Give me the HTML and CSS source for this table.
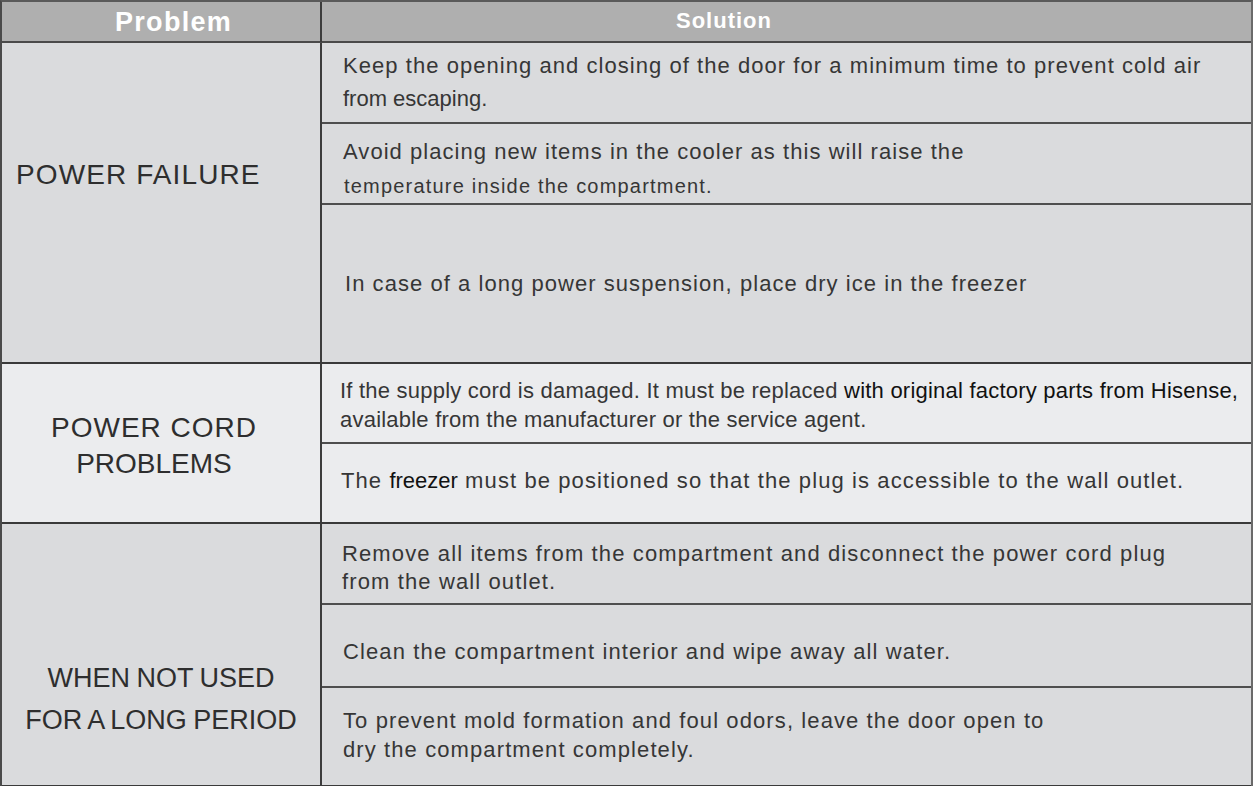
FILE: index.html
```html
<!DOCTYPE html>
<html>
<head>
<meta charset="utf-8">
<link rel="stylesheet" href="styles.css">
</head>
<body>
<div class="table">
  <div class="head">
    <div class="hcell hp">Problem</div>
    <div class="hcell hs">Solution</div>
  </div>

  <div class="group g1">
    <div class="prob pf">POWER FAILURE</div>
    <div class="sols">
      <div class="sol s11"><span class="ln">Keep the opening and closing of the door for a minimum time to prevent cold air</span><span class="ln plain">from escaping.</span></div>
      <div class="sol s12"><span class="ln">Avoid placing new items in the cooler as this will raise the</span><span class="ln sm">temperature inside the compartment.</span></div>
      <div class="sol s13"><span class="ln">In case of a long power suspension, place dry ice in the freezer</span></div>
    </div>
  </div>

  <div class="group g2">
    <div class="prob pc"><span class="ln">POWER CORD</span><span class="ln pl2">PROBLEMS</span></div>
    <div class="sols">
      <div class="sol s21"><span class="ln">If the supply cord is damaged. It must be replaced <span class="dk">with original factory parts from Hisense,</span></span><span class="ln">available from the manufacturer or the service agent.</span></div>
      <div class="sol s22"><span class="ln">The <span class="dk tight">freezer</span> must be positioned so that the plug is accessible to the wall outlet.</span></div>
    </div>
  </div>

  <div class="group g3">
    <div class="prob pw"><span class="ln">WHEN NOT USED</span><span class="ln">FOR A LONG PERIOD</span></div>
    <div class="sols">
      <div class="sol s31"><span class="ln">Remove all items from the compartment and disconnect the power cord plug</span><span class="ln">from the wall outlet.</span></div>
      <div class="sol s32"><span class="ln">Clean the compartment interior and wipe away all water.</span></div>
      <div class="sol s33"><span class="ln">To prevent mold formation and foul odors, leave the door open to</span><span class="ln">dry the compartment completely.</span></div>
    </div>
  </div>
</div>
</body>
</html>
```

FILE: styles.css
```css
* { box-sizing: border-box; }
html, body { margin: 0; padding: 0; background: #ffffff; }
body { font-family: "Liberation Sans", Arial, sans-serif; color: #363636; }

.table {
  width: 1253px;
  border-left: 2px solid #4a4a4a;
  border-right: 2px solid #6a6a6a;
  border-top: 2px solid #5a5a5a;
}

.head {
  display: grid;
  grid-template-columns: 320px 1fr;
  height: 41px;
  background: #afafaf;
  border-bottom: 2px solid #4a4a4a;
}
.hcell { color: #fff; font-weight: bold; white-space: nowrap; }
.hp { border-right: 2px solid #3c3c3c; font-size: 27px; letter-spacing: 1.3px; line-height: 40px; padding-left: 113px; }
.hs { font-size: 22px; letter-spacing: 1px; line-height: 38px; padding-left: 354px; }

.group {
  display: grid;
  grid-template-columns: 320px 1fr;
  border-bottom: 2px solid #3a3a3a;
}
.g1 { background: #dadbdd; height: 321px; }
.g2 { background: #ebecee; height: 160px; }
.g3 { background: #dadbdd; height: 263px; }

.prob {
  border-right: 2px solid #3c3c3c;
  color: #2e2e2e;
  white-space: nowrap;
}
.pf { font-size: 28px; letter-spacing: 1.1px; padding-top: 114px; padding-left: 14px; line-height: 36px; }
.pc { font-size: 28px; letter-spacing: 1px; padding-top: 46px; padding-right: 14px; line-height: 36px; text-align: center; }
.pc .pl2 { letter-spacing: 0; }
.pw { font-size: 27px; padding-top: 133px; line-height: 42px; text-align: center; word-spacing: -1px; }

.sols { display: flex; flex-direction: column; }
.sol {
  border-bottom: 2px solid #4e4e4e;
  font-size: 22px;
  letter-spacing: 1.05px;
  padding-left: 21px;
  white-space: nowrap;
}
.sol:last-child { border-bottom: none; }
.ln { display: block; }
.dk { color: #111; }
.tight { letter-spacing: 0; }
.plain { letter-spacing: 0; }
.sm { font-size: 20px; letter-spacing: 1.2px; padding-left: 1px; }

.s11 { height: 81px; padding-top: 6px; line-height: 33px; }
.s12 { height: 81px; padding-top: 11px; line-height: 34px; }
.s13 { flex: 1; display: flex; align-items: center; padding-left: 23px; }
.s21 { height: 80px; padding-top: 12px; line-height: 29px; letter-spacing: 0.22px; padding-left: 18px; }
.s22 { flex: 1; padding-top: 22px; line-height: 30px; padding-left: 19px; letter-spacing: 1.1px; }
.s31 { height: 81px; padding-top: 16px; line-height: 28px; padding-left: 20px; letter-spacing: 1.12px; }
.s32 { height: 83px; padding-top: 32px; line-height: 30px; letter-spacing: 1.12px; }
.s33 { flex: 1; padding-top: 18px; line-height: 29px; letter-spacing: 1.1px; }
```
